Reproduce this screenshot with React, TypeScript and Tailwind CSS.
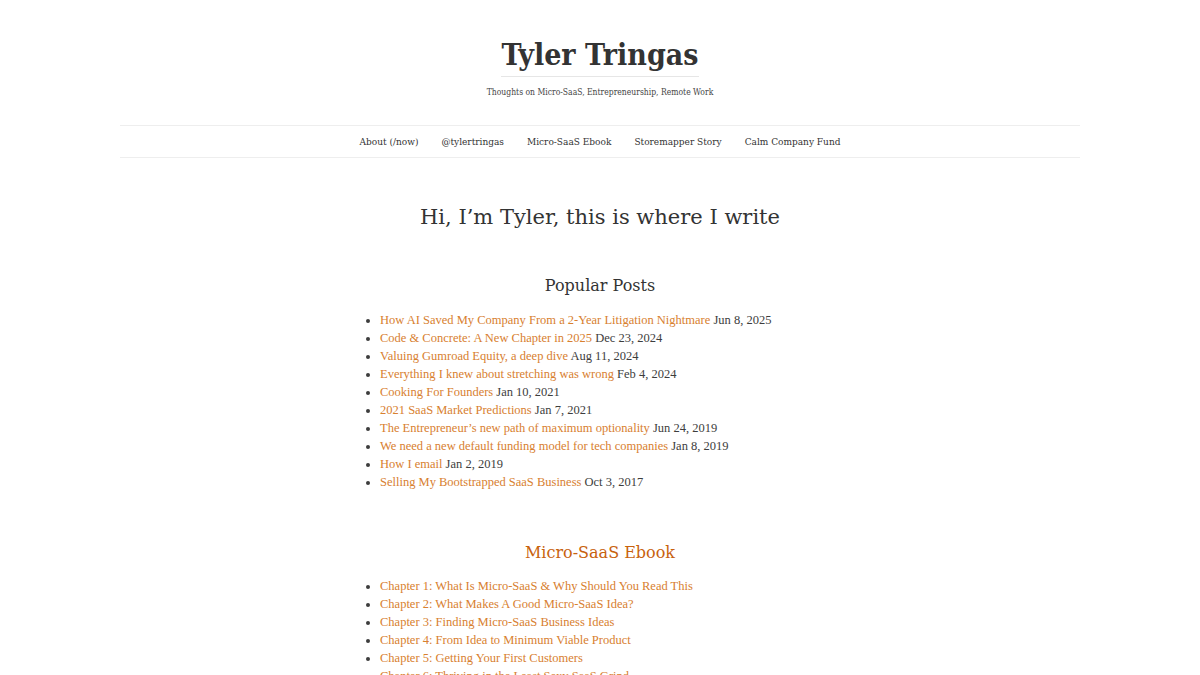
const navItems = ["About (/now)", "@tylertringas", "Micro-SaaS Ebook", "Storemapper Story", "Calm Company Fund"];

const popularPosts = [
  { title: "How AI Saved My Company From a 2-Year Litigation Nightmare", date: "Jun 8, 2025" },
  { title: "Code & Concrete: A New Chapter in 2025", date: "Dec 23, 2024" },
  { title: "Valuing Gumroad Equity, a deep dive", date: "Aug 11, 2024" },
  { title: "Everything I knew about stretching was wrong", date: "Feb 4, 2024" },
  { title: "Cooking For Founders", date: "Jan 10, 2021" },
  { title: "2021 SaaS Market Predictions", date: "Jan 7, 2021" },
  { title: "The Entrepreneur’s new path of maximum optionality", date: "Jun 24, 2019" },
  { title: "We need a new default funding model for tech companies", date: "Jan 8, 2019" },
  { title: "How I email", date: "Jan 2, 2019" },
  { title: "Selling My Bootstrapped SaaS Business", date: "Oct 3, 2017" },
];

const chapters = [
  "Chapter 1: What Is Micro-SaaS & Why Should You Read This",
  "Chapter 2: What Makes A Good Micro-SaaS Idea?",
  "Chapter 3: Finding Micro-SaaS Business Ideas",
  "Chapter 4: From Idea to Minimum Viable Product",
  "Chapter 5: Getting Your First Customers",
  "Chapter 6: Thriving in the Least Sexy SaaS Grind",
];

const slab = "font-['DejaVu_Serif_Condensed','DejaVu_Serif',serif]";
const heading = "font-['DejaVu_Serif',serif]";
const body = "font-['Liberation_Serif',serif]";

export default function App() {
  return (
    <div className={`min-h-screen bg-white text-[#3d3d3d] ${body}`}>
      {/* header */}
      <header className="flex flex-col items-center pt-[36px]">
        <h1 className={`${slab} font-bold text-[30px] leading-[38px] text-[#333] border-b border-[#e6e6e6] pb-[2px]`}>
          Tyler Tringas
        </h1>
        <p className={`${slab} mt-[9px] text-[8.5px] text-[#444]`}>
          Thoughts on Micro-SaaS, Entrepreneurship, Remote Work
        </p>
      </header>

      {/* nav */}
      <nav className="mx-[120px] mt-[26px] h-[33px] border-y border-[#eeeeee] flex items-center justify-center gap-[23px]">
        {navItems.map((item) => (
          <a key={item} href="#" className={`${slab} text-[10px] text-[#333]`}>
            {item}
          </a>
        ))}
      </nav>

      <main className="w-[520px] mx-auto">
        <h2 className={`${heading} text-center text-[21px] text-[#333] mt-[44px] leading-[30px]`}>
          Hi, I’m Tyler, this is where I write
        </h2>

        <h3 className={`${heading} text-center text-[16px] text-[#333] mt-[42px] leading-[24px]`}>
          Popular Posts
        </h3>
        <ul className="list-disc pl-[40px] mt-[13px] text-[12.5px] leading-[18px]">
          {popularPosts.map((p) => (
            <li key={p.title}>
              <a href="#" className="text-[#d8802f]">
                {p.title}
              </a>{" "}
              {p.date}
            </li>
          ))}
        </ul>

        <h3 className={`${heading} text-center text-[16px] text-[#c8620e] mt-[50px] leading-[24px]`}>
          Micro-SaaS Ebook
        </h3>
        <ul className="list-disc pl-[40px] mt-[12px] text-[12.5px] leading-[18px]">
          {chapters.map((c) => (
            <li key={c}>
              <a href="#" className="text-[#d8802f]">
                {c}
              </a>
            </li>
          ))}
        </ul>
      </main>
    </div>
  );
}
